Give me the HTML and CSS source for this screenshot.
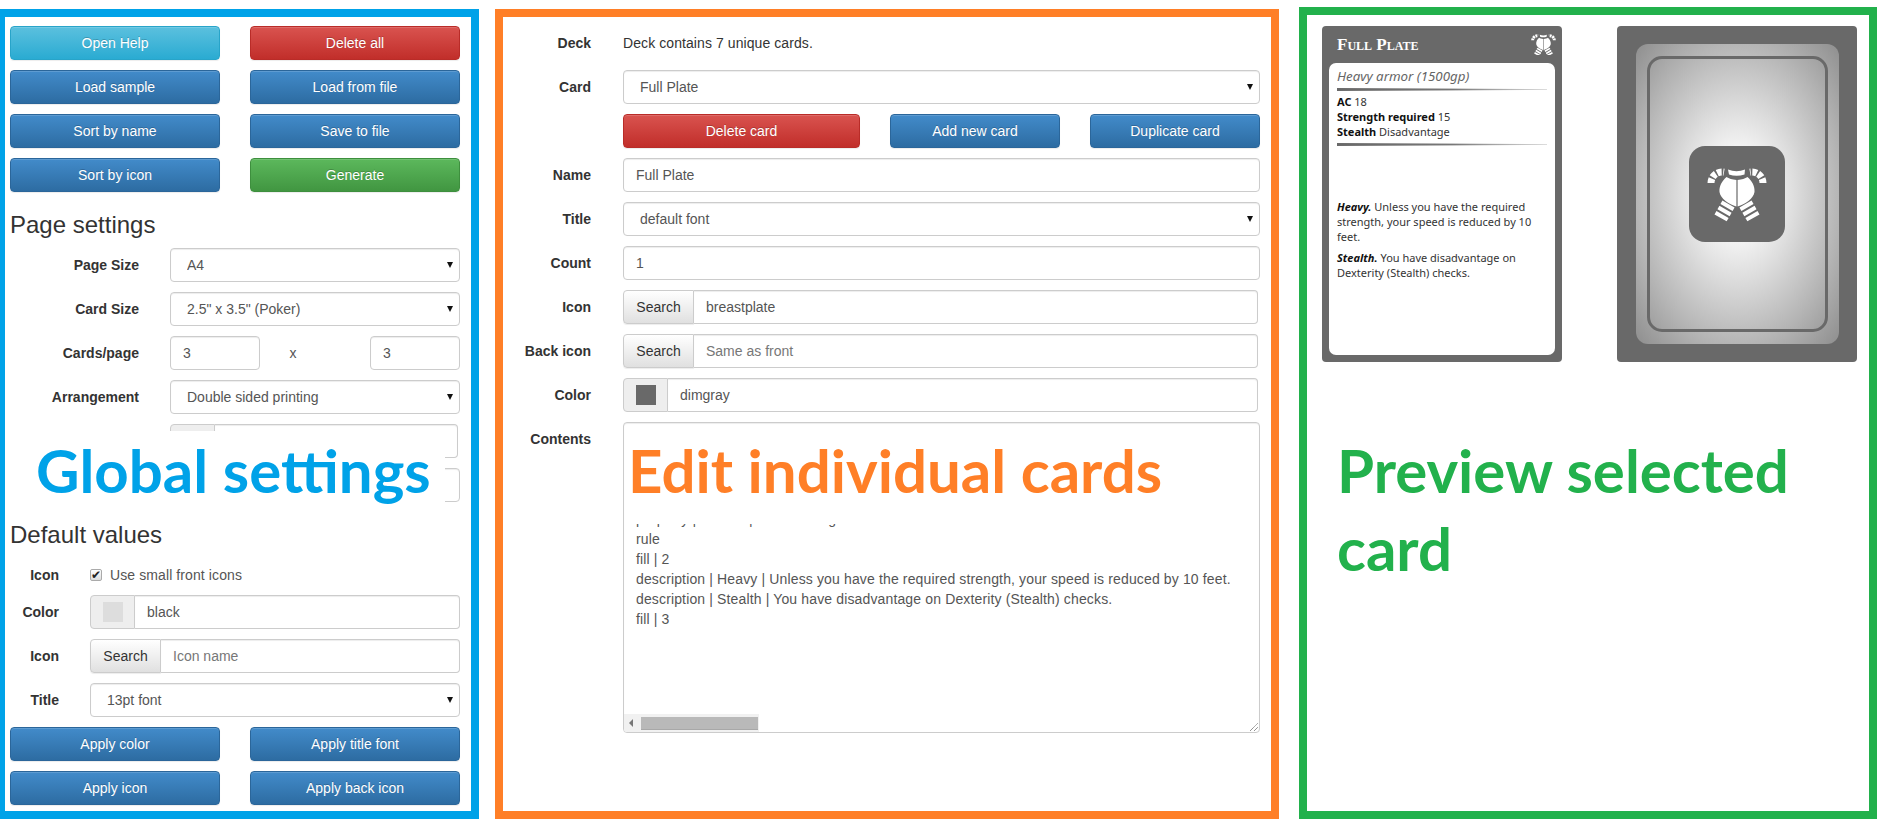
FILE: index.html
```html
<!DOCTYPE html>
<html lang="en">
<head>
<meta charset="utf-8">
<title>Card generator</title>
<link rel="stylesheet" href="styles.css">
</head>
<body>
<svg class="defs" width="0" height="0" aria-hidden="true">
  <symbol id="plate" viewBox="0 0 96 96">
    <path d="M39 23.5Q47.5 27 56 23.5L55.5 28.5Q47.5 31 40 28.5Z" fill="#fff"/>
    <path d="M47.4 34C43 33.5 40 32.5 37.5 31C33 35 30 40 30.5 46C31.5 53 40 58 47.4 60.5Z" fill="#fff"/>
    <path d="M48.6 34C53 33.5 56 32.5 58.5 31C63 35 66 40 65.5 46C64.5 53 56 58 48.6 60.5Z" fill="#fff"/>
    <g fill="none" stroke="#fff">
      <path d="M22 37A11 11 0 0 1 35 26.2" stroke-width="7" stroke-dasharray="4.5 1.6"/>
      <path d="M74 37A11 11 0 0 0 61 26.2" stroke-width="7" stroke-dasharray="4.5 1.6"/>
      <path d="M39.5 58L31.5 72" stroke-width="14" stroke-dasharray="4 2"/>
      <path d="M56.5 58L64.5 72" stroke-width="14" stroke-dasharray="4 2"/>
    </g>
  </symbol>
</svg>

<section class="panel panel-global">
  <div class="btn-grid">
    <button class="btn info">Open Help</button>
    <button class="btn danger">Delete all</button>
    <button class="btn primary">Load sample</button>
    <button class="btn primary">Load from file</button>
    <button class="btn primary">Sort by name</button>
    <button class="btn primary">Save to file</button>
    <button class="btn primary">Sort by icon</button>
    <button class="btn success">Generate</button>
  </div>

  <h3 class="heading">Page settings</h3>
  <div class="rows">
    <div class="row wide"><label class="label">Page Size</label>
      <div class="select"><select class="control"><option>A4</option></select></div></div>
    <div class="row wide"><label class="label">Card Size</label>
      <div class="select"><select class="control"><option>2.5" x 3.5" (Poker)</option></select></div></div>
    <div class="row wide"><label class="label">Cards/page</label>
      <div class="triple">
        <input class="control" value="3">
        <span class="times">x</span>
        <input class="control" value="3">
      </div></div>
    <div class="row wide"><label class="label">Arrangement</label>
      <div class="select"><select class="control"><option>Double sided printing</option></select></div></div>
    <div class="row wide"><span class="label"></span>
      <div class="group short"><span class="addon swatch-addon"></span><input class="control"></div></div>
    <div class="row wide"><span class="label"></span><input class="control"></div>
  </div>

  <h3 class="heading">Default values</h3>
  <div class="rows">
    <div class="row narrow check-row"><label class="label">Icon</label>
      <label class="check"><input type="checkbox" class="tick" checked>Use small front icons</label></div>
    <div class="row narrow"><label class="label">Color</label>
      <div class="group"><span class="addon swatch-addon"><i class="swatch light"></i></span><input class="control" value="black"></div></div>
    <div class="row narrow"><label class="label">Icon</label>
      <div class="group"><button class="addon search">Search</button><input class="control" placeholder="Icon name"></div></div>
    <div class="row narrow"><label class="label">Title</label>
      <div class="select"><select class="control"><option>13pt font</option></select></div></div>
    <div class="btn-grid">
      <button class="btn primary">Apply color</button>
      <button class="btn primary">Apply title font</button>
      <button class="btn primary">Apply icon</button>
      <button class="btn primary">Apply back icon</button>
    </div>
  </div>
  <div class="callout callout-global">Global settings</div>
</section>

<section class="panel panel-edit">
  <div class="rows">
    <div class="row edit"><label class="label">Deck</label><p class="static">Deck contains 7 unique cards.</p></div>
    <div class="row edit"><label class="label">Card</label>
      <div class="select"><select class="control"><option>Full Plate</option></select></div></div>
    <div class="row edit"><span class="label"></span>
      <div class="card-actions">
        <button class="btn danger">Delete card</button>
        <button class="btn primary">Add new card</button>
        <button class="btn primary">Duplicate card</button>
      </div></div>
    <div class="row edit"><label class="label">Name</label><input class="control" value="Full Plate"></div>
    <div class="row edit"><label class="label">Title</label>
      <div class="select"><select class="control"><option>default font</option></select></div></div>
    <div class="row edit"><label class="label">Count</label><input class="control" value="1"></div>
    <div class="row edit"><label class="label">Icon</label>
      <div class="group short"><button class="addon search">Search</button><input class="control" value="breastplate"></div></div>
    <div class="row edit"><label class="label">Back icon</label>
      <div class="group short"><button class="addon search">Search</button><input class="control" placeholder="Same as front"></div></div>
    <div class="row edit"><label class="label">Color</label>
      <div class="group short"><span class="addon swatch-addon"><i class="swatch dim"></i></span><input class="control" value="dimgray"></div></div>
    <div class="row edit top"><label class="label">Contents</label>
      <div class="textbox">
        <pre class="lines">property | Stealth | Disadvantage
rule
fill | 2
description | Heavy | Unless you have the required strength, your speed is reduced by 10 feet.
description | Stealth | You have disadvantage on Dexterity (Stealth) checks.
fill | 3</pre>
        <div class="hscroll"><i class="arrow"></i><i class="thumb"></i></div>
        <svg class="grip" width="8" height="8" viewBox="0 0 8 8"><path d="M0 8L8 0M4 8L8 4" stroke="#666" stroke-width="1" stroke-dasharray="1 .6"/></svg>
      </div></div>
  </div>
  <div class="callout callout-edit">Edit individual cards</div>
</section>

<section class="panel panel-preview">
  <div class="cards">
    <article class="card">
      <header class="card-head">
        <h4 class="card-title">Full Plate</h4>
        <svg class="card-icon" viewBox="18 22 60 50"><use href="#plate" width="96" height="96"/></svg>
      </header>
      <div class="card-body">
        <p class="subtitle">Heavy armor (1500gp)</p>
        <div class="rule"></div>
        <div class="props">
          <p><b>AC</b> 18</p>
          <p><b>Strength required</b> 15</p>
          <p><b>Stealth</b> Disadvantage</p>
        </div>
        <div class="rule"></div>
        <p class="desc first"><b><i>Heavy.</i></b> Unless you have the required strength, your speed is reduced by 10 feet.</p>
        <p class="desc"><b><i>Stealth.</i></b> You have disadvantage on Dexterity (Stealth) checks.</p>
      </div>
    </article>
    <article class="card back">
      <div class="back-glow">
        <div class="back-frame">
          <div class="back-icon"><svg width="96" height="96"><use href="#plate" width="96" height="96"/></svg></div>
        </div>
      </div>
    </article>
  </div>
  <div class="note">Preview selected card</div>
</section>
</body>
</html>
```
FILE: styles.css
```css
* { box-sizing: border-box; }

html, body { margin: 0; height: 829px; overflow: hidden; background: #fff; }

body {
  display: flex;
  align-items: flex-start;
  font: 14px/20px "Liberation Sans", Arial, sans-serif;
  color: #333;
}

.defs { position: absolute; }

.panel { position: relative; border-style: solid; border-width: 8px; }

.panel-global {
  width: 479px; height: 810px; margin-top: 9px;
  border-color: #00a2e8; border-left-width: 5px;
  padding: 9px 11px 0 5px;
}
.panel-edit {
  width: 784px; height: 810px; margin: 9px 0 0 16px;
  border-color: #ff7f27;
  padding: 9px 11px 0 0;
}
.panel-preview {
  width: 578px; height: 812px; margin: 7px 0 0 20px;
  border-color: #22b14c;
  padding: 11px 12px 0 15px;
}

/* buttons */
.btn {
  height: 34px; padding: 0 12px;
  font: inherit; color: #fff; text-align: center;
  border: 1px solid; border-radius: 4px;
  text-shadow: 0 -1px 0 rgba(0,0,0,.2);
  box-shadow: inset 0 1px 0 rgba(255,255,255,.15), 0 1px 1px rgba(0,0,0,.075);
}
.primary { background: linear-gradient(#428bca, #2d6ca2); border-color: #2b669a; }
.danger  { background: linear-gradient(#d9534f, #c12e2a); border-color: #b92c28; }
.success { background: linear-gradient(#5cb85c, #419641); border-color: #3e8f3e; }
.info    { background: linear-gradient(#5bc0de, #2aabd2); border-color: #28a4c9; }

.btn-grid { display: grid; grid-template-columns: 210px 210px; column-gap: 30px; row-gap: 10px; }

.heading { margin: 20px 0 10px; font-size: 24px; line-height: 26px; font-weight: 400; }

/* form rows */
.rows { display: flex; flex-direction: column; gap: 10px; }
.row { display: flex; align-items: center; gap: 31px; min-height: 34px; }
.row.top { align-items: flex-start; }
.row.top .label { padding-top: 7px; }
.row.edit { gap: 32px; }

.label { flex: none; font-weight: 700; text-align: right; }
.wide .label { width: 129px; }
.narrow .label { width: 49px; }
.edit .label { width: 88px; }

.control {
  display: block; width: 100%; height: 34px; padding: 0 12px;
  font: inherit; color: #555; background: #fff;
  border: 1px solid #ccc; border-radius: 4px;
  box-shadow: inset 0 1px 1px rgba(0,0,0,.075);
  outline: 0;
}
.control::placeholder { color: #777; opacity: 1; }

select.control { appearance: none; padding-left: 16px; }
.select { position: relative; flex: 1; }
.select::after {
  content: ""; position: absolute; right: 7px; top: 50%; margin-top: -3px;
  border-style: solid; border-width: 6px 3px 0; border-color: #111 transparent transparent;
}

.triple { flex: 1; display: grid; grid-template-columns: 90px 1fr 90px; align-items: center; text-align: center; }
.times { color: #555; padding-right: 44px; }

.group { flex: 1; display: flex; min-width: 0; }
.group.short { margin-right: 2px; }
.group .control { flex: 1; min-width: 0; border-radius: 0 4px 4px 0; border-left: 0; }
.addon {
  flex: none; height: 34px; display: flex; align-items: center; justify-content: center;
  border: 1px solid #ccc; border-radius: 4px 0 0 4px; font: inherit; color: #333;
}
.swatch-addon { width: 45px; background: #eee; }
.search {
  width: 71px; padding: 0;
  background: linear-gradient(#fff, #e0e0e0);
  box-shadow: 0 1px 1px rgba(0,0,0,.075);
}
.swatch { display: block; width: 20px; height: 20px; }
.swatch.light { background: #ddd; }
.swatch.dim { background: #696969; }

.check-row { align-items: flex-end; min-height: 27px; }
.check { display: flex; align-items: center; gap: 8px; color: #555; font-weight: 400; letter-spacing: .1px; }
.tick {
  appearance: none; position: relative; flex: none;
  width: 12px; height: 12px; margin: 0;
  border: 1px solid #aaa; border-radius: 2px;
  background: linear-gradient(#fff, #ddd);
}
.tick::after {
  content: "✔"; position: absolute; left: 0; top: -5px;
  font: 12px/20px "DejaVu Sans", sans-serif; color: #222;
}

.static { margin: 0; color: #333; letter-spacing: .08px; }

.card-actions { flex: 1; display: grid; grid-template-columns: 237px 170px 170px; column-gap: 30px; }

.textbox {
  position: relative; flex: 1; height: 311px; padding: 86px 0 0 12px; overflow: hidden;
  border: 1px solid #ccc; border-radius: 4px;
  box-shadow: inset 0 1px 1px rgba(0,0,0,.075);
}
.lines { margin: 0; font: inherit; color: #555; letter-spacing: .14px; }
.hscroll {
  position: absolute; left: 0; bottom: 0; width: 135px; height: 18px; background: #f1f1f1;
  display: flex; align-items: center;
}
.arrow {
  margin-left: 5px; width: 0; height: 0;
  border-style: solid; border-width: 4px 4px 4px 0; border-color: transparent #777 transparent transparent;
}
.thumb { margin-left: 8px; width: 117px; height: 13px; background: #b9b9b9; border-bottom: 1px solid #a8a8a8; }
.grip { position: absolute; right: 1px; bottom: 1px; }

/* annotations laid over the form */
.callout {
  position: absolute; background: #fff;
  font: 700 60px/74px Lato, "Open Sans", sans-serif; white-space: nowrap;
  padding-top: 2px;
}
.callout-global { left: 25px; top: 414px; width: 415px; height: 74px; padding-left: 6px; color: #00a2e8; }
.callout-edit { left: 125px; top: 414px; width: 622px; height: 93px; padding-left: 0; color: #ff7f27; }

.note {
  margin: 69px 0 0 15px; width: 500px;
  font: 700 60px/78px Lato, "Open Sans", sans-serif; color: #22b14c;
}

/* card preview */
.cards { display: flex; gap: 55px; }
.card { width: 240px; height: 336px; background: #696969; border-radius: 4px; display: flex; flex-direction: column; padding: 0 7px 7px; }
.card-head { height: 37px; flex: none; display: flex; align-items: center; justify-content: space-between; padding: 0 0 0 8px; }
.card-title { margin: 0; color: #fff; font: 700 17px/20px "Liberation Serif", serif; font-variant: small-caps; }
.card-icon { width: 25px; height: 21px; margin-right: -1px; margin-top: -1px; }
.card-body {
  flex: 1; background: #fff; border-radius: 7px; padding: 5px 8px 0;
  font: 11px/15px "Noto Sans", sans-serif; color: #333;
}
.card-body p { margin: 0; }
.card-body b { color: #111; }
.subtitle { font-size: 13.3px; line-height: 17px; font-style: italic; color: #666; }
.rule {
  height: 3px; margin-top: 3px;
  background: linear-gradient(90deg, #696969, #777 55%, #bbb 85%, #ddd);
  clip-path: polygon(0 0, 100% 33%, 100% 66%, 0 100%);
}
.props { margin: 3px 0 4px; }
.desc { margin-top: 6px !important; }
.desc.first { margin-top: 53px !important; }

.back { padding: 18px 18px 18px 19px; }
.back-glow {
  flex: 1; border-radius: 12px; padding: 12px 11px;
  background: radial-gradient(ellipse farthest-corner at 50% 50%, #fff 12%, #ddd 40%, #b5b5b5 71%, #8e8e8e 100%);
  display: flex;
}
.back-frame {
  flex: 1; border: 3px solid #696969; border-radius: 15px; padding-right: 2px;
  display: flex; align-items: center; justify-content: center;
}
.back-icon { width: 96px; height: 96px; background: #696969; border-radius: 16px; }
.back-icon svg { display: block; }
```
